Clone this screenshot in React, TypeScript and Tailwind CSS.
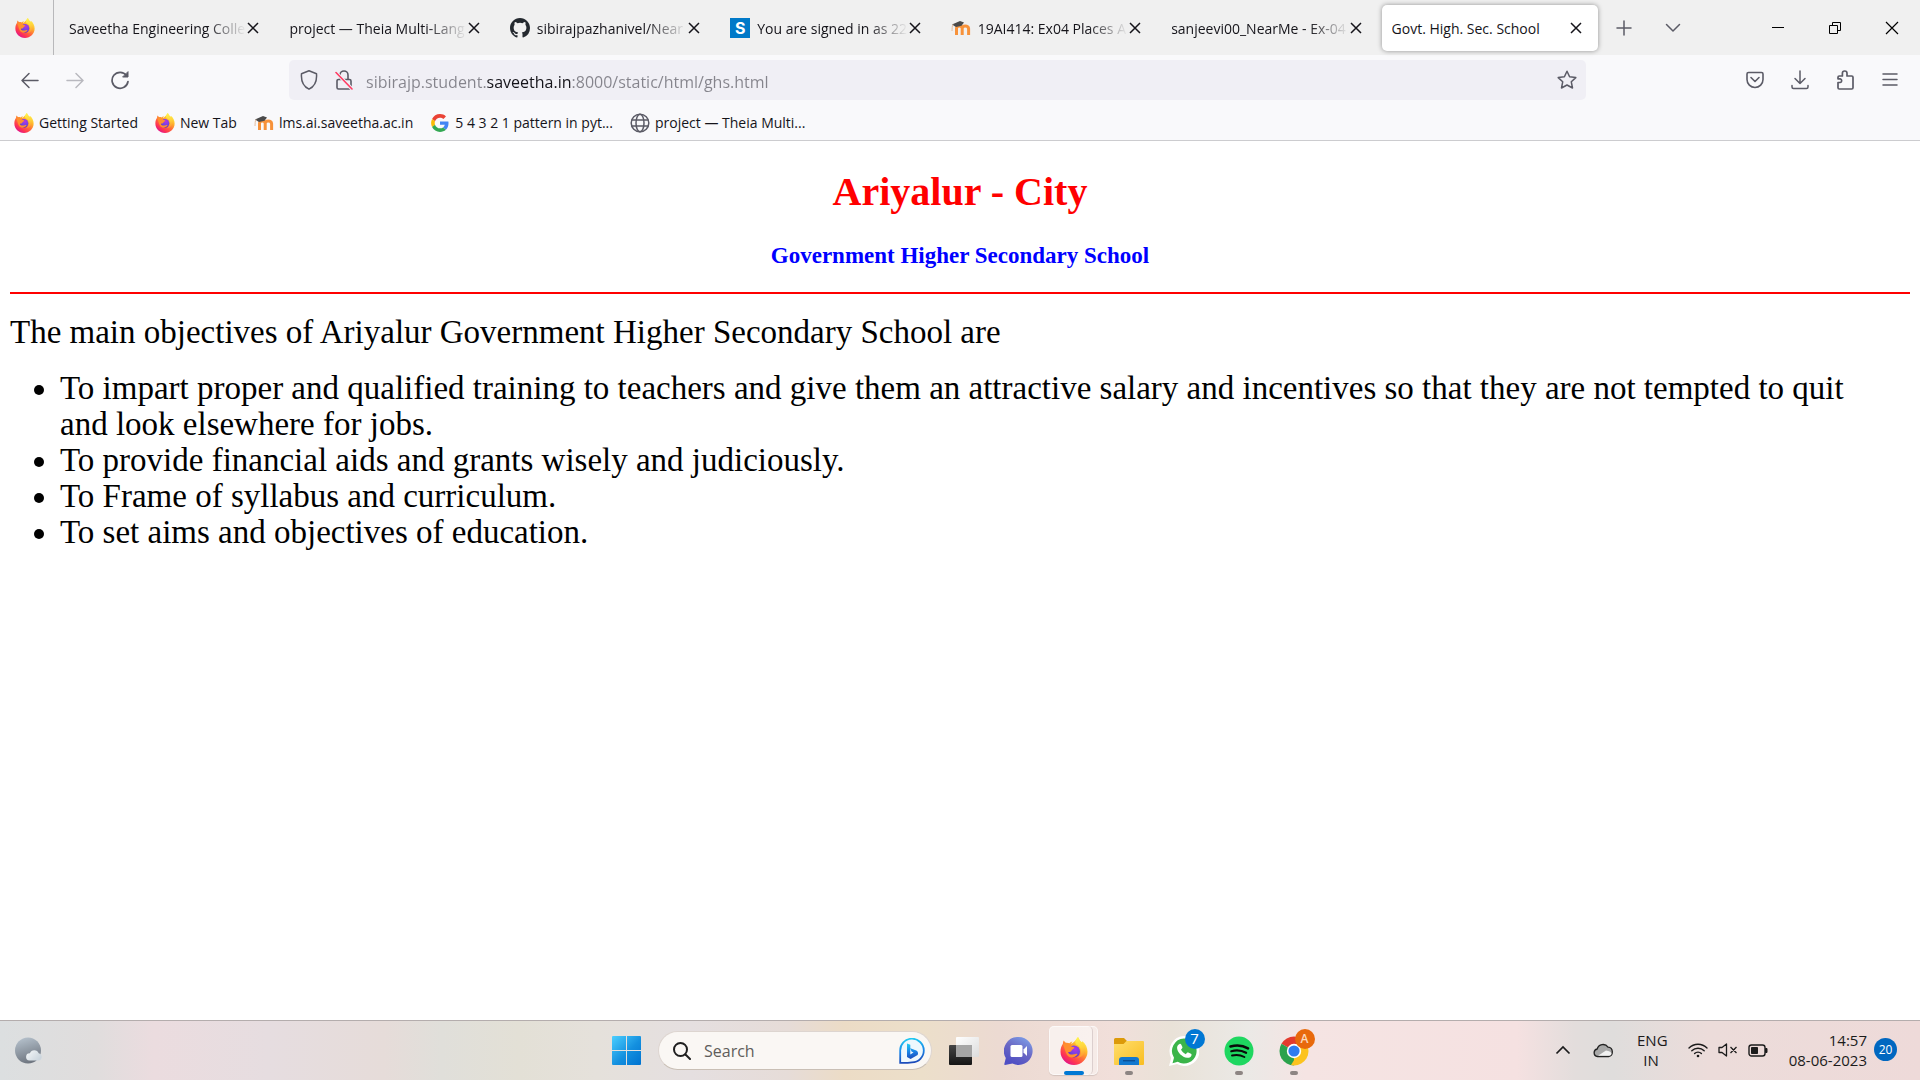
import type { ReactNode } from "react";

type IconProps = { className?: string };

function Firefox({ id, className }: { id: string; className?: string }) {
  return (
    <svg viewBox="0 0 28 28" className={className} aria-hidden="true">
      <defs>
        <linearGradient id={`${id}-body`} x1="0.85" y1="0.1" x2="0.25" y2="0.95">
          <stop offset="0" stopColor="#fff44f" />
          <stop offset="0.3" stopColor="#ffb62b" />
          <stop offset="0.55" stopColor="#ff7139" />
          <stop offset="0.8" stopColor="#ff3750" />
          <stop offset="1" stopColor="#e31587" />
        </linearGradient>
        <radialGradient id={`${id}-core`} cx="0.6" cy="0.3" r="0.8">
          <stop offset="0" stopColor="#b833e1" />
          <stop offset="0.5" stopColor="#7542e5" />
          <stop offset="1" stopColor="#5b2fb5" />
        </radialGradient>
        <linearGradient id={`${id}-flame`} x1="0.5" y1="0" x2="0.6" y2="1">
          <stop offset="0" stopColor="#fff44f" />
          <stop offset="0.5" stopColor="#ffd23a" />
          <stop offset="1" stopColor="#ff9130" />
        </linearGradient>
      </defs>
      <path
        d="M18 0c1 1.400 1.200 3 3.600 5.200 1-.2.6-1.200.6-1.200 3.400 2.600 5.300 6.600 5.300 10.800C27.500 22 21.500 28 14 28S.5 22 .5 14.800c0-3.200.9-5.900 2.400-8 0-1.200.2-2.200.7-3.200.6.8 1.200 1.400 2.200 2.200 1.500-.2 2.600 0 3.600.5 1.200-1.200 2-1.600 3.100-1.700-.8.9-1.100 1.500-1.200 2.300C13.400 5.800 16 3.500 18 0z"
        fill={`url(#${id}-body)`}
      />
      <circle cx="14" cy="14.500" r="6" fill={`url(#${id}-core)`} />
      <path
        d="M18 0c-3 2.600-3.300 5.200-2 7.400 2.400.8 4.600 3 5 6 .3 3-1 6-3.800 7.500 4.500-.4 7.300-3.400 7.600-7.600.2-3.600-1.500-6.300-3.200-8.100C19.400 3.600 18.600 1.600 18 0z"
        fill={`url(#${id}-flame)`}
      />
      <path
        d="M3 7.500c2.200-1.700 4.600-1.700 6.600-.6 1 .6 1.300 1.800 1.800 2.600.8.600 2.200.4 2.900.7.1.9-.7 1.700-1.900 2.300-.8.500-.7 1.500-1.400 2-.9.600-2.400.2-3 .9 1.500 2.600 5 2.700 8 1.400 1-.4 1.900.1 1.300.8C14.500 21.500 9 21.500 6.800 17.600 5 14.400 4.500 10.500 3 7.500z"
        fill="#ff8f2e"
      />
    </svg>
  );
}

function Moodle({ className }: IconProps) {
  return (
    <svg viewBox="0 0 20 20" className={className} fill="none" aria-hidden="true">
      <path d="M5.500 17V10.500Q5.500 8 8.300 8T11.200 10.500V17M11.200 17V10.500Q11.200 8 14.200 8T17.600 10.500V17" stroke="#f7923a" strokeWidth="3" />
      <path d="M1 6.500 9 3l4 1.500-2.500 3.300L5 9z" fill="#4a4a4a" />
      <path d="M2 6.500C1 8 1.200 10.500 1 13" stroke="#e2b490" strokeWidth="0.900" />
    </svg>
  );
}

function Google({ className }: IconProps) {
  return (
    <svg viewBox="-3 -3 54 54" className={className} aria-hidden="true">
      <path fill="#EA4335" d="M24 9.500c3.540 0 6.710 1.220 9.210 3.600l6.850-6.850C35.900 2.380 30.470 0 24 0 14.620 0 6.510 5.380 2.560 13.220l7.980 6.190C12.430 13.720 17.740 9.500 24 9.500z" />
      <path fill="#4285F4" d="M46.980 24.550c0-1.570-.15-3.090-.38-4.550H24v9.020h12.940c-.58 2.960-2.260 5.480-4.780 7.180l7.730 6c4.510-4.180 7.090-10.360 7.090-17.650z" />
      <path fill="#FBBC05" d="M10.530 28.590c-.48-1.450-.76-2.990-.76-4.590s.27-3.140.76-4.590l-7.980-6.190C.92 16.460 0 20.120 0 24c0 3.880.92 7.540 2.560 10.780l7.970-6.190z" />
      <path fill="#34A853" d="M24 48c6.480 0 11.930-2.130 15.890-5.810l-7.730-6c-2.150 1.450-4.920 2.300-8.160 2.300-6.260 0-11.570-4.220-13.470-9.910l-7.980 6.190C6.510 42.620 14.620 48 24 48z" />
    </svg>
  );
}

function GitHub({ className }: IconProps) {
  return (
    <svg viewBox="0 0 16 16" className={className} fill="#24292f" aria-hidden="true">
      <path d="M8 0C3.580 0 0 3.580 0 8c0 3.540 2.290 6.530 5.470 7.590.4.070.55-.17.55-.38 0-.19-.01-.82-.01-1.490-2.010.37-2.530-.49-2.690-.94-.09-.23-.48-.94-.82-1.130-.28-.15-.68-.52-.01-.53.63-.01 1.080.58 1.230.82.72 1.210 1.870.87 2.330.66.070-.52.28-.87.51-1.070-1.780-.2-3.640-.89-3.640-3.950 0-.87.31-1.590.82-2.150-.08-.2-.36-1.020.08-2.120 0 0 .67-.21 2.200.82a7.600 7.600 0 0 1 4 0c1.530-1.040 2.200-.82 2.200-.82.44 1.100.16 1.920.08 2.120.51.56.82 1.270.82 2.150 0 3.070-1.870 3.750-3.650 3.950.29.25.54.73.54 1.480 0 1.070-.01 1.930-.01 2.200 0 .21.15.46.55.38A8.010 8.010 0 0 0 16 8c0-4.420-3.580-8-8-8z" />
    </svg>
  );
}

function Cross({ className }: IconProps) {
  return (
    <svg viewBox="0 0 14 14" className={className} fill="none" stroke="currentColor" strokeWidth="1.500" aria-hidden="true">
      <path d="M2 2l10 10M12 2L2 12" />
    </svg>
  );
}

function Line({ children, className = "size-5", width = 1.5 }: { children: ReactNode; className?: string; width?: number }) {
  return (
    <svg viewBox="0 0 20 20" className={className} fill="none" stroke="currentColor" strokeWidth={width} strokeLinecap="round" strokeLinejoin="round" aria-hidden="true">
      {children}
    </svg>
  );
}

const tabs: { title: string; icon?: ReactNode }[] = [
  { title: "Saveetha Engineering Colle" },
  { title: "project — Theia Multi-Lang" },
  { title: "sibirajpazhanivel/Near", icon: <GitHub className="size-5 shrink-0" /> },
  {
    title: "You are signed in as 22",
    icon: <span className="flex size-5 shrink-0 items-center justify-center bg-[#0079c8] font-['Inter',sans-serif] text-base font-bold text-white">S</span>,
  },
  { title: "19AI414: Ex04 Places A", icon: <Moodle className="size-5 shrink-0" /> },
  { title: "sanjeevi00_NearMe - Ex-04" },
];

function TabStrip() {
  return (
    <div className="flex h-[55px] bg-[#f0f0f0] text-[#15141a]">
      <button aria-label="Firefox View" className="mr-[3px] flex w-[54px] shrink-0 items-center justify-center border-r border-[#b8b8ba] pr-1">
        <Firefox id="view" className="size-5" />
      </button>
      <div role="tablist" className="grid min-w-0 flex-1 grid-cols-7 items-center">
        {tabs.map((tab) => (
          <div key={tab.title} className="flex h-[46px] min-w-0 items-center pr-[17px] pl-3">
            <button role="tab" aria-selected="false" className="flex min-w-0 flex-1 items-center gap-[7px]">
              {tab.icon}
              <span className="min-w-0 flex-1 overflow-hidden pt-0.5 text-left whitespace-nowrap [mask-image:linear-gradient(to_right,black_calc(100%-40px),transparent)]">
                {tab.title}
              </span>
            </button>
            <button aria-label={`Close ${tab.title}`}>
              <Cross className="size-3.5" />
            </button>
          </div>
        ))}
        <div className="flex min-w-0 px-0.5">
          <div className="flex h-[46px] min-w-0 flex-1 items-center rounded-[5px] bg-white pr-[15px] pl-2.5 shadow-[0_0_5px_rgba(0,0,0,0.4)]">
            <button role="tab" aria-selected="true" className="min-w-0 flex-1 overflow-hidden pt-0.5 text-left whitespace-nowrap">
              Govt. High. Sec. School
            </button>
            <button aria-label="Close Govt. High. Sec. School">
              <Cross className="size-3.5" />
            </button>
          </div>
        </div>
      </div>
      <div className="flex w-[149px] shrink-0 items-center text-[#5b5b66]">
        <button aria-label="New tab" className="flex w-[48px] justify-center">
          <Line><path d="M10 3v14M3 10h14" /></Line>
        </button>
        <button aria-label="List all tabs" className="flex w-[50px] justify-center">
          <Line><path d="M3.500 6.500 10 13l6.500-6.500" /></Line>
        </button>
      </div>
      <div className="flex shrink-0 items-center text-black">
        <button aria-label="Minimize" className="flex w-[57px] justify-center">
          <svg viewBox="0 0 14 14" className="size-3.5" stroke="currentColor" aria-hidden="true"><path d="M1 6.500h12" /></svg>
        </button>
        <button aria-label="Restore" className="flex w-[57px] justify-center">
          <svg viewBox="0 0 14 14" className="size-3.5" fill="none" stroke="currentColor" aria-hidden="true">
            <path d="M1.500 4.500h8v8h-8zM4.500 4V1.500h8v8H10" />
          </svg>
        </button>
        <button aria-label="Close window" className="flex w-[57px] justify-center">
          <svg viewBox="0 0 14 14" className="size-3.5" stroke="currentColor" strokeWidth="1.200" aria-hidden="true"><path d="M1 1l12 12M13 1L1 13" /></svg>
        </button>
      </div>
    </div>
  );
}

function ToolButton({ label, children, dim }: { label: string; children: ReactNode; dim?: boolean }) {
  return (
    <button aria-label={label} disabled={dim} className="flex w-[45px] shrink-0 justify-center disabled:opacity-40">
      {children}
    </button>
  );
}

function Toolbar() {
  return (
    <div className="flex h-[50px] items-center bg-[#f9f9fb] pr-2 pl-[7px] text-[#5b5b66]">
      <ToolButton label="Back"><Line><path d="M18 10.500H2M9 3.500l-7 7 7 7" /></Line></ToolButton>
      <ToolButton label="Forward" dim><Line><path d="M2 10.500h16M11 3.500l7 7-7 7" /></Line></ToolButton>
      <ToolButton label="Reload">
        <Line width={1.7}>
          <path d="M16.500 5.500A8 8 0 1 0 18 11.500" />
          <path d="M18 2v5h-5z" fill="currentColor" strokeWidth="1" />
        </Line>
      </ToolButton>
      <div className="w-[147px]" />
      <div className="flex h-10 min-w-0 flex-1 items-center rounded-[5px] bg-[#f0eff5] pr-[9px] pl-2.5">
        <button aria-label="Tracking protection" className="mr-[15px]">
          <Line><path d="M10 .8 2.500 3.800c-.5 6 1 12.200 7.500 15.400 6.500-3.200 8-9.400 7.500-15.400z" /></Line>
        </button>
        <button aria-label="Connection is not secure" className="mr-3">
          <Line width={1.6}>
            <path d="M6 9V5a4 4 0 0 1 8 0v4M4.500 9.500h11a1.500 1.500 0 0 1 1.500 1.500v6.500a1.500 1.500 0 0 1-1.500 1.500h-11A1.500 1.500 0 0 1 3 17.500V11a1.500 1.500 0 0 1 1.500-1.500z" />
            <path d="M2 2.500l16 16.500" stroke="#f0eff5" strokeWidth="3.500" />
            <path d="M2 2.500l16 16.500" stroke="#ff3b62" />
          </Line>
        </button>
        <input
          aria-label="Address"
          defaultValue="sibirajp.student.saveetha.in:8000/static/html/ghs.html"
          className="min-w-0 flex-1 bg-[linear-gradient(to_right,#85848c_121px,#15141a_121px,#15141a_205px,#85848c_205px)] bg-clip-text pt-[3px] text-base text-transparent outline-none"
        />
        <button aria-label="Bookmark this page">
          <Line><path d="M10 1.200l2.600 5.600 6.200.8-4.500 4.200 1.200 6.200L10 15l-5.500 3 1.200-6.200L1.200 7.600l6.200-.8z" /></Line>
        </button>
      </div>
      <div className="w-[146px]" />
      <ToolButton label="Save to Pocket">
        <Line width={1.6}><path d="M3.500 2.500h13A1.500 1.500 0 0 1 18 4v5.500a8 8 0 0 1-16 0V4a1.500 1.500 0 0 1 1.500-1.500zM6 7.500l4 4 4-4" /></Line>
      </ToolButton>
      <ToolButton label="Downloads"><Line><path d="M10 1v12.500M5 8.500l5 5 5-5M2 15.500V17a1.500 1.500 0 0 0 1.500 1.500h13A1.500 1.500 0 0 0 18 17v-1.500" /></Line></ToolButton>
      <ToolButton label="Extensions">
        <Line width={1.7}>
          <path d="M3 12.500v5.200c0 .7.500 1.300 1.300 1.300h12.400c.8 0 1.300-.6 1.300-1.300V7.300c0-.7-.5-1.300-1.300-1.300H12V3.300a2.300 2.300 0 0 0-4.600 0V6H4.300C3.500 6 3 6.600 3 7.300v1.500h2.200a1.900 1.900 0 0 1 0 3.700z" />
        </Line>
      </ToolButton>
      <ToolButton label="Menu"><Line><path d="M3 4h14M3 9.500h14M3 15h14" /></Line></ToolButton>
    </div>
  );
}

const bookmarks: { title: string; icon: ReactNode }[] = [
  { title: "Getting Started", icon: <Firefox id="bm1" className="size-5" /> },
  { title: "New Tab", icon: <Firefox id="bm2" className="size-5" /> },
  { title: "lms.ai.saveetha.ac.in", icon: <Moodle className="size-5" /> },
  { title: "5 4 3 2 1 pattern in pyt...", icon: <Google className="size-5" /> },
  {
    title: "project — Theia Multi...",
    icon: (
      <span className="text-[#5b5b66]">
        <Line><circle cx="10" cy="10" r="8.800" /><ellipse cx="10" cy="10" rx="4" ry="8.800" /><path d="M2 7h16M2 13h16" /></Line>
      </span>
    ),
  },
];

function Bookmarks() {
  return (
    <nav aria-label="Bookmarks" className="flex h-9 items-center gap-[17px] border-b border-[#cccccf] bg-[#f9f9fb] px-[14px] pt-px text-[#15141a]">
      {bookmarks.map((b) => (
        <a key={b.title} href="#" className="flex items-center gap-[5px] whitespace-nowrap">
          {b.icon}
          {b.title}
        </a>
      ))}
    </nav>
  );
}

function Page() {
  return (
    <main className="flex-1 bg-white px-2.5 pt-7 font-['Liberation_Serif',serif] text-black">
      <h1 className="text-center text-[40px] leading-[46px] font-bold text-[#ff0000]">Ariyalur - City</h1>
      <h3 className="mt-[27px] text-center text-[23px] leading-[27px] font-bold text-[#0000ff]">Government Higher Secondary School</h3>
      <hr className="mt-[23px] border-t-2 border-[#ff0000]" />
      <p className="mt-5 text-[33px] leading-9">The main objectives of Ariyalur Government Higher Secondary School are</p>
      <ul className="mt-5 list-disc pr-5 pl-[50px] text-[33px] leading-9">
        <li>To impart proper and qualified training to teachers and give them an attractive salary and incentives so that they are not tempted to quit and look elsewhere for jobs.</li>
        <li>To provide financial aids and grants wisely and judiciously.</li>
        <li>To Frame of syllabus and curriculum.</li>
        <li>To set aims and objectives of education.</li>
      </ul>
    </main>
  );
}

function TaskButton({ label, children, running, active }: { label: string; children: ReactNode; running?: boolean; active?: boolean }) {
  return (
    <button aria-label={label} className="relative flex h-[59px] w-[55px] items-center justify-center">
      {active && <span className="absolute inset-x-[3px] inset-y-[5px] rounded-[5px] border border-white/60 bg-white/40 shadow-[0_1px_1px_rgba(0,0,0,0.12)]" />}
      {active && <span className="absolute inset-y-[5px] right-[8px] left-[3px] rounded-[5px] border-r border-[#dccfce] bg-white/30" />}
      <span className="relative">{children}</span>
      {running && <span className="absolute bottom-[5px] h-1 w-2 rounded-full bg-[#8d8583]" />}
      {active && <span className="absolute bottom-[5px] h-1 w-5 rounded-full bg-[#0078d4]" />}
    </button>
  );
}

function Taskbar() {
  return (
    <footer className="grid h-[60px] shrink-0 grid-cols-[1fr_auto_1fr] items-center border-t border-[#b4adad] bg-[linear-gradient(90deg,#dcdfe0_0%,#e0dddd_5%,#ebdcdf_8%,#e6dde0_14%,#e6dcd9_20%,#e0dfda_23%,#e3e0d6_27%,#e5e1db_31%,#e5dfe0_36%,#e6dcd8_41%,#ecdcc6_44%,#ecdfca_48%,#ecdad2_52%,#f1dfda_58%,#e9e2d8_61%,#ebe9e6_65%,#f5e4e3_68%,#f5e1e1_79%,#e3dddc_82%,#dfdddc_84%,#ecdcda_89%,#eedad9_100%)] text-[15px] text-[#1b1b1b]">
      <button aria-label="Weather" className="ml-[14px] justify-self-start">
        <svg viewBox="0 0 28 28" className="size-7" aria-hidden="true">
          <defs>
            <linearGradient id="moon" x1="0.3" y1="0" x2="0.6" y2="1"><stop offset="0" stopColor="#b4c0cb" /><stop offset="1" stopColor="#6c737d" /></linearGradient>
            <linearGradient id="mooncloud" x1="0" y1="0" x2="1" y2="0.6"><stop offset="0" stopColor="#f6f8f9" /><stop offset="1" stopColor="#ccd6de" /></linearGradient>
          </defs>
          <circle cx="14" cy="13.500" r="13" fill="url(#moon)" />
          <path d="M15.500 23.500a3.600 3.600 0 0 1 .4-7.200 4.700 4.700 0 0 1 8.800 0 3.700 3.700 0 0 1 .3 7.200z" fill="url(#mooncloud)" />
        </svg>
      </button>

      <div className="flex items-center">
        <TaskButton label="Start">
          <svg viewBox="0 0 29 29" className="size-[29px]" aria-hidden="true">
            <defs>
              <linearGradient id="win" gradientUnits="userSpaceOnUse" x1="0" y1="0" x2="29" y2="29"><stop offset="0" stopColor="#4ccfff" /><stop offset="0.550" stopColor="#1490df" /><stop offset="1" stopColor="#0072d0" /></linearGradient>
            </defs>
            <path fill="url(#win)" d="M1 0h13v14H0V1a1 1 0 0 1 1-1zM15 0h13a1 1 0 0 1 1 1v13H15zM0 15h14v14H1a1 1 0 0 1-1-1zM15 15h14v13a1 1 0 0 1-1 1H15z" />
          </svg>
        </TaskButton>
        <label className="mr-1 ml-1 flex h-[39px] w-[274px] items-center rounded-full border border-b-[#c9bfb5] border-[#ddd5d0] bg-[#faf7f4] pr-1.5 pl-3.5">
          <svg viewBox="0 0 18 18" className="size-[18px]" fill="none" stroke="#1f1f1f" strokeWidth="2" strokeLinecap="round" aria-hidden="true">
            <circle cx="7.500" cy="7.500" r="6.500" /><path d="M12.500 12.500l4.500 4.500" />
          </svg>
          <input aria-label="Search" placeholder="Search" className="ml-[13px] min-w-0 flex-1 text-base outline-none placeholder:text-[#5f5d5b]" />
          <svg viewBox="0 0 26 26" className="size-[26px]" fill="none" aria-hidden="true">
            <defs>
              <linearGradient id="bing" x1="0.400" y1="0" x2="0.500" y2="1"><stop offset="0" stopColor="#20c8f0" /><stop offset="0.500" stopColor="#1a86e8" /><stop offset="1" stopColor="#1b48b8" /></linearGradient>
            </defs>
            <path d="M1.200 24.800V13A11.800 11.800 0 1 1 13 24.300q-6 .8-11.800.5z" fill="#eef8fd" stroke="url(#bing)" strokeWidth="1.800" />
            <path d="M8 5.500l3.300 1.300v9.700l3.200-2-2-1-1.200-3.200 6 2.300a3 3 0 0 1 1.300 4.300l-7 4.200L8 19z" fill="url(#bing)" />
          </svg>
        </label>
        <TaskButton label="Task view">
          <svg viewBox="0 0 30 28" className="h-7 w-[30px]" aria-hidden="true">
            <defs>
              <linearGradient id="tvd" x1="0" y1="0" x2="0" y2="1"><stop offset="0" stopColor="#454545" /><stop offset="1" stopColor="#151515" /></linearGradient>
              <linearGradient id="tvl" x1="0" y1="0" x2="1" y2="1"><stop offset="0" stopColor="#ffffff" /><stop offset="1" stopColor="#dcdcdc" /></linearGradient>
            </defs>
            <rect y="8" width="23" height="20" rx="1" fill="url(#tvd)" />
            <rect x="7" width="23" height="20" rx="1" fill="url(#tvl)" />
            <path d="M7 8h16v12H7z" fill="#a5a5a5" />
          </svg>
        </TaskButton>
        <TaskButton label="Chat">
          <svg viewBox="0 0 29 28" className="h-7 w-[29px]" aria-hidden="true">
            <defs>
              <linearGradient id="chat" x1="0.900" y1="0.100" x2="0.400" y2="1"><stop offset="0" stopColor="#7b9be6" /><stop offset="0.500" stopColor="#6a67c4" /><stop offset="1" stopColor="#4f4fc4" /></linearGradient>
            </defs>
            <path d="M14.500 0a14 14 0 1 1-6 26.600L1 28q-.9 0-.7-1l1.500-6A14 14 0 0 1 14.500 0z" fill="url(#chat)" />
            <rect x="6.500" y="8" width="12" height="12" rx="1.500" fill="#fff" />
            <path d="M19.500 12.500 23 9v10l-3.500-3.500z" fill="#fff" />
          </svg>
        </TaskButton>
        <TaskButton label="Firefox" active><Firefox id="task" className="size-7" /></TaskButton>
        <TaskButton label="File Explorer" running>
          <svg viewBox="0 0 30 28" className="h-7 w-[30px]" aria-hidden="true">
            <defs>
              <linearGradient id="fold" x1="0" y1="0" x2="1" y2="1"><stop offset="0" stopColor="#ffde6b" /><stop offset="1" stopColor="#f9bd22" /></linearGradient>
            </defs>
            <path d="M0 2.500A1.500 1.500 0 0 1 1.500 1H10l3 3h15v4H0z" fill="#dc9a0a" />
            <path d="M0 7h9.500l3-3H29a1 1 0 0 1 1 1v22a1 1 0 0 1-1 1H1a1 1 0 0 1-1-1z" fill="url(#fold)" />
            <path d="M5 28v-5a3 3 0 0 1 3-3h14a3 3 0 0 1 3 3v5z" fill="#1278cf" />
            <path d="M9 23.700h12" stroke="#0b4f96" strokeWidth="1.400" />
          </svg>
        </TaskButton>
        <TaskButton label="WhatsApp">
          <svg viewBox="0 0 30 30" className="size-[30px]" aria-hidden="true">
            <path d="M15 0a15 15 0 1 1-7 28L0 30l2.200-8A15 15 0 0 1 15 0z" fill="#fff" />
            <path d="M15 2.500a12.500 12.500 0 1 1-6.200 23.300L3.500 27.300 5 21.800A12.500 12.500 0 0 1 15 2.500z" fill="#3bb54a" />
            <path d="M10.500 8c.6-.3 1.400-.1 1.700.5l1.200 2.600c.2.500 0 1-.4 1.400l-1 1c1 2.200 2.600 3.700 4.800 4.700l1.200-1.400c.3-.4.8-.5 1.300-.3l2.700 1.300c.5.300.7.800.5 1.400-.6 2-2.400 2.900-4.400 2.600-5-.8-9.500-5.200-10-9.600-.2-1.800.8-3.500 2.400-4.200z" fill="#fff" />
          </svg>
          <span className="absolute -top-[7px] -right-[6px] flex size-5 items-center justify-center rounded-full bg-[#0078d4] text-[15px] text-white">7</span>
        </TaskButton>
        <TaskButton label="Spotify" running>
          <svg viewBox="0 0 30 30" className="size-[30px]" fill="none" stroke="#0a0a0a" strokeLinecap="round" aria-hidden="true">
            <circle cx="15" cy="15" r="14.500" fill="#1ed760" stroke="none" />
            <path d="M6.500 10.500c6-1.600 12.500-1 17.500 1.800" strokeWidth="2.600" />
            <path d="M7.300 15.200c5.200-1.400 10.500-.8 14.800 1.600" strokeWidth="2.200" />
            <path d="M8 19.500c4.500-1.100 8.600-.6 12.400 1.500" strokeWidth="1.900" />
          </svg>
        </TaskButton>
        <TaskButton label="Google Chrome" running>
          <svg viewBox="0 0 30 30" className="size-[30px]" aria-hidden="true">
            <path d="M15 15 2.450 7.750A14.500 14.500 0 0 1 27.550 7.750z" fill="#e33b2e" />
            <path d="M15 15 27.550 7.750A14.500 14.500 0 0 1 15 29.500z" fill="#fcc31e" />
            <path d="M15 15v14.500A14.500 14.500 0 0 1 2.450 7.750z" fill="#2ba24c" />
            <path d="M15 8h12.700l.8 2-8 8z" fill="#fcc31e" />
            <path d="M15 8H27.700L25 5H15z" fill="#e33b2e" />
            <path d="M21 18.500 15 29.500l-3-.4L17 21z" fill="#fcc31e" />
            <circle cx="15" cy="15" r="7.200" fill="#fff" />
            <circle cx="15" cy="15" r="5.600" fill="#2f7cf0" />
          </svg>
          <span className="absolute -top-[7px] -right-[6px] flex size-5 items-center justify-center rounded-full bg-[#e8690b] text-xs font-semibold text-[#fbd9bd]">A</span>
        </TaskButton>
      </div>

      <div className="flex items-center justify-self-end pr-[23px] pb-0.5">
        <button aria-label="Show hidden icons" className="mr-[22px]">
          <svg viewBox="0 0 16 16" className="size-4" fill="none" stroke="currentColor" strokeWidth="1.700" aria-hidden="true"><path d="M1.500 11.500 8 5l6.500 6.500" /></svg>
        </button>
        <button aria-label="OneDrive" className="mr-6">
          <svg viewBox="0 0 20 16" className="h-4 w-5" aria-hidden="true">
            <path d="M4.500 14.500A3.800 3.800 0 0 1 4.200 7 6 6 0 0 1 15 5.200a4.700 4.700 0 0 1 .5 9.300z" fill="#a8a8a8" stroke="#222" strokeWidth="1.300" />
            <path d="M5 13.800 13 8.500c3 .3 5.700 2 5.500 3.500-.4 1.500-2 1.800-3 1.800z" fill="#f1f1f1" />
          </svg>
        </button>
        <button className="mr-[23px] w-7 text-center leading-5">ENG IN</button>
        <button aria-label="Network, volume and battery" className="mr-[15px] flex items-center gap-2.5">
          <svg viewBox="0 0 20 16" className="h-4 w-5" fill="none" stroke="currentColor" strokeWidth="1.400" strokeLinecap="round" aria-hidden="true">
            <path d="M1 6a12.700 12.700 0 0 1 18 0M3.800 8.800a8.800 8.800 0 0 1 12.400 0M6.600 11.500a4.800 4.800 0 0 1 6.800 0" />
            <circle cx="10" cy="14" r="1.300" fill="currentColor" stroke="none" />
          </svg>
          <svg viewBox="0 0 20 16" className="h-4 w-5" fill="none" stroke="currentColor" strokeWidth="1.300" strokeLinejoin="round" aria-hidden="true">
            <path d="M1 5.500h3L8.500 2v12L4 10.500H1zM12.500 5l6 6M18.500 5l-6 6" />
          </svg>
          <svg viewBox="0 0 20 16" className="h-4 w-5" fill="none" stroke="currentColor" strokeWidth="1.400" aria-hidden="true">
            <rect x="1" y="3" width="16" height="11" rx="2.500" /><rect x="3" y="5" width="7" height="7" rx="0.800" fill="currentColor" stroke="none" /><path d="M17.500 6.500h1.500v4h-1.500z" fill="currentColor" strokeWidth="1" />
          </svg>
        </button>
        <button className="mr-[7px] w-[84px] text-right leading-5">14:57<br />08-06-2023</button>
        <button aria-label="20 notifications" className="flex size-[23px] items-center justify-center rounded-full bg-[#0067c0] text-xs text-white">20</button>
      </div>
    </footer>
  );
}

export default function App() {
  return (
    <div className="flex min-h-screen flex-col bg-white font-['Open_Sans','Noto_Sans',sans-serif] text-sm">
      <header>
        <TabStrip />
        <Toolbar />
        <Bookmarks />
      </header>
      <Page />
      <Taskbar />
    </div>
  );
}
